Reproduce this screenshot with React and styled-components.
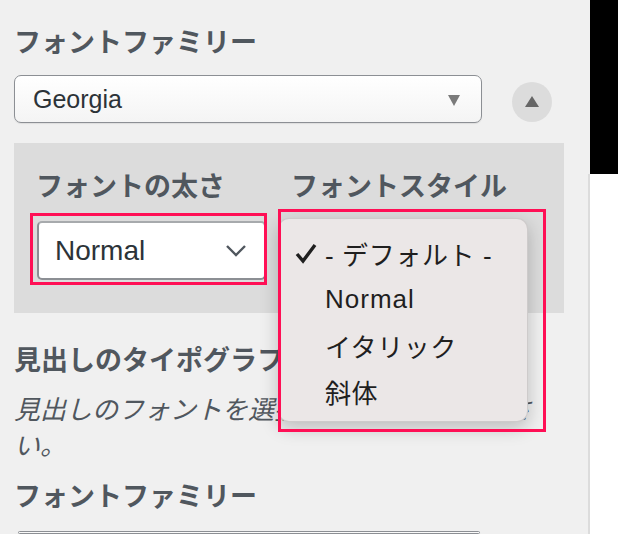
import React from 'react';
import styled, { createGlobalStyle } from 'styled-components';

const GlobalStyle = createGlobalStyle`
  html, body {
    margin: 0;
    padding: 0;
    background: #f0f0f0;
  }
  body {
    font-family: "Liberation Sans", "Noto Sans CJK JP", sans-serif;
  }
`

const Page = styled.div`
  display: flex;
  width: 618px;
  height: 534px;
  overflow: hidden;
`

const Sidebar = styled.div`
  flex: 0 0 588px;
  box-sizing: border-box;
  padding: 25px 24px 0 14px;
  background: #f0f0f0;
`

const Edge = styled.div`
  flex: 1;
  display: flex;
  flex-direction: column;
`

const EdgeTop = styled.div`
  height: 174px;
  border-left: 2px solid #f0f0f0;
  background: #000;
`

const EdgeBottom = styled.div`
  flex: 1;
  border-left: 2px solid #dcdcdc;
  background: #fff;
`

const Title = styled.h3`
  margin: ${p => p.$top || 0}px 0 0;
  font-size: 27px;
  line-height: 36px;
  font-weight: 700;
  color: #50575e;
  white-space: nowrap;
`

const FamilyRow = styled.div`
  display: flex;
  align-items: center;
  gap: 30px;
  margin-top: 14px;
`

const FamilySelect = styled.div`
  position: relative;
  box-sizing: border-box;
  height: ${p => p.$cut ? 3 : 48}px;
  width: ${p => p.$cut ? 462 : 468}px;
  margin-top: ${p => p.$cut ? 16 : 0}px;
  margin-left: ${p => p.$cut ? 4 : 0}px;
  padding-left: 18px;
  display: flex;
  align-items: center;
  border: 1px solid #8c8f94;
  border-radius: 7px;
  background: linear-gradient(#ffffff, #f4f4f4);
  box-shadow: 0 1px 1px rgba(0,0,0,0.08);
  font-size: 25px;
  color: #2c3338;
`

const DownTri = styled.span`
  position: absolute;
  right: 21px;
  top: 19px;
  width: 0;
  height: 0;
  border-left: 6px solid transparent;
  border-right: 6px solid transparent;
  border-top: 11px solid #7a7a7a;
`

const RoundButton = styled.div`
  width: 40px;
  height: 40px;
  margin-top: 6px;
  border-radius: 50%;
  background: #dcdcdc;
  display: flex;
  align-items: center;
  justify-content: center;
`

const UpTri = styled.span`
  width: 0;
  height: 0;
  border-left: 7px solid transparent;
  border-right: 7px solid transparent;
  border-bottom: 11px solid #666;
  margin-top: -2px;
`

const Panel = styled.div`
  margin-top: 20px;
  height: 170px;
  box-sizing: border-box;
  padding: 26px 0 0 22px;
  background: #dcdcdc;
  display: grid;
  grid-template-columns: 255px 1fr;
  grid-template-rows: 36px 59px;
  row-gap: 16px;
`

const PanelLabel = styled.div`
  font-size: 27px;
  line-height: 36px;
  font-weight: 700;
  color: #50575e;
  white-space: nowrap;
`

const Highlight = styled.div`
  position: relative;
  &::after {
    content: '';
    position: absolute;
    top: ${p => p.$t}px;
    left: ${p => p.$l}px;
    width: ${p => p.$w}px;
    height: ${p => p.$h}px;
    box-sizing: border-box;
    border: 3px solid #ff0f55;
    pointer-events: none;
    z-index: 3;
  }
`

const WeightSelect = styled.div`
  box-sizing: border-box;
  width: 229px;
  height: 59px;
  margin-left: 1px;
  padding: 0 17px 0 16px;
  display: flex;
  align-items: center;
  justify-content: space-between;
  background: #fff;
  border: 2px solid #8c8f94;
  border-top-color: #a7aaad;
  border-radius: 5px;
  font-size: 28px;
  color: #2c3338;
`

const Popup = styled.div`
  position: absolute;
  top: -3px;
  left: -13px;
  width: 250px;
  height: 204px;
  box-sizing: border-box;
  padding-top: 11px;
  background: #ebe7e7;
  border: 1px solid rgba(0,0,0,0.12);
  border-radius: 11px;
  box-shadow: 0 6px 18px rgba(0,0,0,0.22);
  z-index: 2;
`

const Option = styled.div`
  position: relative;
  height: 46px;
  display: flex;
  align-items: center;
  padding-left: 46px;
  font-size: 26px;
  letter-spacing: ${p => p.$latin ? 1 : 0.6}px;
  color: #1f1f1f;
  white-space: nowrap;
`

const Check = styled.svg`
  position: absolute;
  left: 16px;
  top: 13px;
`

const Description = styled.p`
  margin: 13px 0 0;
  width: 540px;
  font-size: 26px;
  line-height: 36px;
  font-style: italic;
  color: #50575e;
`

const options = ['- デフォルト -', 'Normal', 'イタリック', '斜体']

export default function App() {
  return (
    <>
      <GlobalStyle />
      <Page>
        <Sidebar>
          <Title>フォントファミリー</Title>
          <FamilyRow>
            <FamilySelect>
              Georgia
              <DownTri />
            </FamilySelect>
            <RoundButton><UpTri /></RoundButton>
          </FamilyRow>

          <Panel>
            <PanelLabel>フォントの太さ</PanelLabel>
            <PanelLabel>フォントスタイル</PanelLabel>
            <Highlight $t={-8} $l={-6} $w={237} $h={72}>
              <WeightSelect>
                Normal
                <svg width="22" height="12" viewBox="0 0 22 12">
                  <polyline points="2,1 11,10 20,1" fill="none" stroke="#50575e" strokeWidth="2.4" />
                </svg>
              </WeightSelect>
            </Highlight>
            <Highlight $t={-12} $l={-13} $w={268} $h={223}>
              <Popup>
                {options.map((o, i) => (
                  <Option key={o} $latin={o === 'Normal'}>
                    {i === 0 && (
                      <Check width="22" height="21" viewBox="0 0 22 21">
                        <polyline points="2,11 8,18 20,2" fill="none" stroke="#1f1f1f" strokeWidth="3.4" />
                      </Check>
                    )}
                    {o}
                  </Option>
                ))}
              </Popup>
            </Highlight>
          </Panel>

          <Title $top={30}>見出しのタイポグラフィー</Title>
          <Description>見出しのフォントを選択して設定してください。</Description>
          <Title $top={15}>フォントファミリー</Title>
          <FamilySelect $cut />
        </Sidebar>
        <Edge>
          <EdgeTop />
          <EdgeBottom />
        </Edge>
      </Page>
    </>
  );
}
